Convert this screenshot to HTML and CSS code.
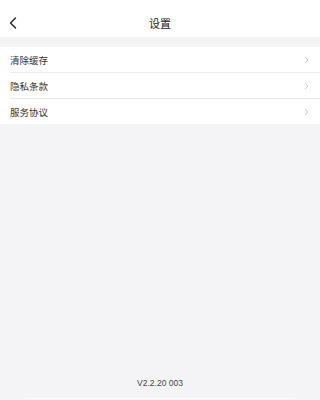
FILE: index.html
```html
<!DOCTYPE html>
<html lang="zh-CN">
<head>
<meta charset="utf-8">
<meta name="viewport" content="width=device-width, initial-scale=1">
<link rel="stylesheet" href="styles.css">
</head>
<body>
<div class="page">
  <header class="header">
    <svg class="back" width="8" height="12" viewBox="0 0 8 12"><path d="M6.5 1 L1.5 6 L6.5 11" fill="none" stroke="#222" stroke-width="1.4" stroke-linecap="round" stroke-linejoin="round"/></svg>
    <div class="title">设置</div>
  </header>
  <div class="list">
    <div class="row"><span class="label">清除缓存</span><svg class="chev" width="5" height="8" viewBox="0 0 5 8"><path d="M1 1 L4 4 L1 7" fill="none" stroke="#c4c4c4" stroke-width="0.9"/></svg></div>
    <div class="row"><span class="label">隐私条款</span><svg class="chev" width="5" height="8" viewBox="0 0 5 8"><path d="M1 1 L4 4 L1 7" fill="none" stroke="#c4c4c4" stroke-width="0.9"/></svg></div>
    <div class="row"><span class="label">服务协议</span><svg class="chev" width="5" height="8" viewBox="0 0 5 8"><path d="M1 1 L4 4 L1 7" fill="none" stroke="#c4c4c4" stroke-width="0.9"/></svg></div>
  </div>
  <div class="spacer"></div>
  <div class="version">V2.2.20 003</div>
  <div class="bottom-line"></div>
</div>
</body>
</html>
```
FILE: styles.css
```css
html, body {
  margin: 0;
  padding: 0;
  background: #f4f4f6;
  font-family: "Noto Sans CJK SC", "Liberation Sans", sans-serif;
}
.page {
  width: 100%;
  height: 100vh;
  min-height: 400px;
  display: flex;
  flex-direction: column;
  background: #f4f4f6;
}
.header {
  height: 37px;
  background: #fff;
  position: relative;
  display: flex;
  align-items: center;
  justify-content: center;
  padding-top: 9px;
  box-sizing: border-box;
}
.back {
  position: absolute;
  left: 9px;
  top: 17px;
}
.title {
  font-size: 11px;
  color: #222;
  line-height: 12px;
}
.list {
  margin-top: 10px;
  background: #fff;
}
.row {
  height: 25px;
  margin-left: 10px;
  padding-right: 11px;
  display: flex;
  align-items: center;
  justify-content: space-between;
  border-top: 1px solid #ececec;
}
.row:first-child {
  border-top: none;
}
.label {
  font-size: 9.5px;
  color: #333;
  line-height: 12px;
}
.spacer {
  flex: 1;
}
.version {
  text-align: center;
  font-family: "Liberation Sans", "Noto Sans CJK SC", sans-serif;
  font-size: 8.5px;
  color: #444;
  line-height: 10px;
  margin-bottom: 10px;
}
.bottom-line {
  height: 1px;
  margin: 0 25px 1px;
  background: #fbfbfc;
}
```
